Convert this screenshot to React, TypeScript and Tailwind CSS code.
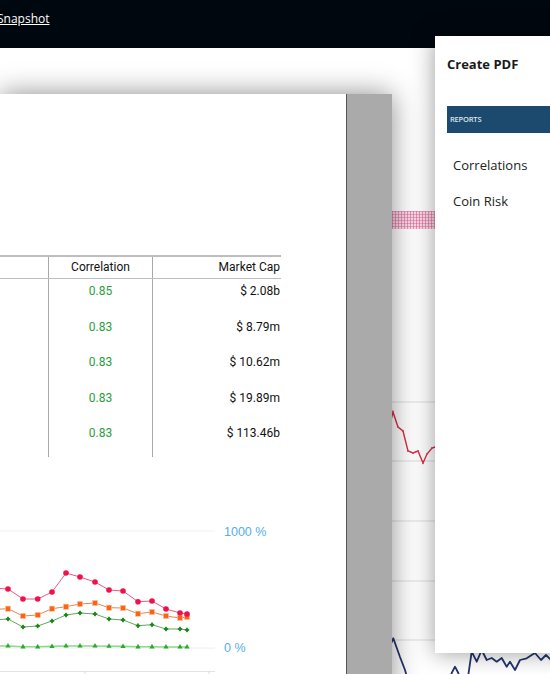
import React from 'react';

const xs = [-8, 8, 23, 37.7, 52, 66, 80, 95, 109, 123, 138, 152, 166, 180, 187];
const series = {
  red: [588, 589, 599, 599, 592, 573, 577, 582, 590, 591, 601.7, 601, 609, 613, 614],
  orange: [609.5, 608.7, 616, 615, 608.7, 606.7, 604, 603, 607.7, 608, 613.7, 612, 616, 618, 617],
  green: [620, 619, 627, 626, 621, 615, 613, 614, 619, 620, 625.7, 624.7, 629, 629, 630],
  lime: [646, 646, 646.8, 646.8, 646.4, 646, 646, 646, 646.2, 646.4, 646.8, 646.8, 647, 647, 647],
};

const rows = [
  { corr: '0.85', cap: '$ 2.08b' },
  { corr: '0.83', cap: '$ 8.79m' },
  { corr: '0.83', cap: '$ 10.62m' },
  { corr: '0.83', cap: '$ 19.89m' },
  { corr: '0.83', cap: '$ 113.46b' },
];

const toPath = (ys: number[]) => xs.map((x, i) => `${i ? 'L' : 'M'}${x} ${ys[i]}`).join(' ');

// background dashboard lines (mostly hidden behind the overlays)
const redBg: [number, number][] = [
  [390, 424], [393, 412], [398, 427], [403, 431], [408, 451], [413, 453], [418, 451],
  [423, 463], [427, 454], [432, 448], [438, 446], [446, 440], [460, 438],
];
const blueBg: [number, number][] = [
  [390, 646], [393.3, 638.3], [400, 657], [405, 670], [409, 684], [448, 684], [451.7, 673],
  [455, 666.7], [458.3, 673], [462, 684], [467, 684], [471.7, 651.7], [476.7, 661.7],
  [481.7, 650], [486.7, 660], [491.7, 658], [496.7, 661.7], [501.7, 658], [506.7, 666.7],
  [510, 661.7], [515, 670], [520, 660], [526.7, 658.3], [531.7, 655], [535, 653],
  [541, 660], [546, 655], [552, 661],
];
const pts = (p: [number, number][]) => p.map(([x, y]) => `${x},${y}`).join(' ');

function DocChart() {
  return (
    <svg width="300" height="180" viewBox="0 500 300 180" className="block">
      <line x1="0" y1="531" x2="215" y2="531" stroke="#f1f1f1" />
      <line x1="0" y1="648" x2="215" y2="648" stroke="#eeeeee" />
      <line x1="0" y1="671.5" x2="215" y2="671.5" stroke="#e3e3e3" />
      <line x1="85" y1="671" x2="85" y2="676" stroke="#d6dbe6" />
      <line x1="209" y1="671" x2="209" y2="676" stroke="#d6dbe6" />
      <text x="224" y="535.5" fill="#55aee6" fontSize="12.5" fontFamily="'Liberation Sans', Arial, sans-serif">1000 %</text>
      <text x="224" y="651.5" fill="#55aee6" fontSize="12.5" fontFamily="'Liberation Sans', Arial, sans-serif">0 %</text>

      <path d={toPath(series.lime)} fill="none" stroke="#8fd68f" strokeWidth="1.6" />
      {xs.map((x, i) => (
        <polygon key={`l${i}`} points={`${x},${series.lime[i] - 3} ${x - 2.6},${series.lime[i] + 1.6} ${x + 2.6},${series.lime[i] + 1.6}`} fill="#2ca82c" />
      ))}

      <path d={toPath(series.green)} fill="none" stroke="#63a863" strokeWidth="1" />
      {xs.map((x, i) => (
        <g key={`g${i}`} fill="#1a871a">
          <rect x={x - 2.2} y={series.green[i] - 0.9} width="4.4" height="1.8" />
          <rect x={x - 0.9} y={series.green[i] - 2.2} width="1.8" height="4.4" />
        </g>
      ))}

      <path d={toPath(series.orange)} fill="none" stroke="#e28855" strokeWidth="1" />
      {xs.map((x, i) => (
        <rect key={`o${i}`} x={x - 2.6} y={series.orange[i] - 2.6} width="5.2" height="5.2" fill="#ff6210" stroke="#f4c9b0" strokeWidth="0.6" />
      ))}

      <path d={toPath(series.red)} fill="none" stroke="#e8588a" strokeWidth="1" />
      {xs.map((x, i) => (
        <circle key={`r${i}`} cx={x} cy={series.red[i]} r="2.8" fill="#f2104c" />
      ))}
    </svg>
  );
}

function BackdropChart() {
  return (
    <svg width="158" height="294" viewBox="392 380 158 294" className="block">
      {[402, 461, 521, 581, 640].map((y) => (
        <line key={y} x1="392" y1={y} x2="550" y2={y} stroke="#dedede" strokeWidth="1.2" />
      ))}
      <polyline points={pts(redBg)} fill="none" stroke="#dc2a44" strokeWidth="1.4" />
      {redBg.map(([x, y], i) => (
        <circle key={i} cx={x} cy={y} r="1" fill="#e2445c" />
      ))}
      <polyline points={pts(blueBg)} fill="none" stroke="#22356c" strokeWidth="1.8" strokeLinejoin="round" />
    </svg>
  );
}

function Heatmap() {
  return (
    <svg width="158" height="18" className="block">
      <defs>
        <pattern id="hatch" width="3" height="3" patternUnits="userSpaceOnUse">
          <rect width="3" height="3" fill="#f8dbe6" />
          <rect x="0" y="0" width="1" height="3" fill="#e2609a" opacity="0.6" />
          <rect x="0" y="0" width="3" height="1" fill="#e2609a" opacity="0.45" />
        </pattern>
      </defs>
      <rect width="158" height="18" fill="url(#hatch)" />
    </svg>
  );
}

export default function App() {
  return (
    <div className="relative h-[674px] w-[550px] overflow-hidden bg-white font-['Open_Sans',sans-serif]">
      {/* Top bar */}
      <header className="h-12 bg-[#01070f] pt-[10px]">
        <a className="-ml-[3px] block text-[12px] leading-[18px] text-white underline">Snapshot</a>
      </header>

      {/* Dashboard behind the preview */}
      <main className="grid grid-cols-[392px_1fr]">
        <div />
        <div>
          <div className="mt-[163px]">
            <Heatmap />
          </div>
          <div className="mt-[151px]">
            <BackdropChart />
          </div>
        </div>
      </main>

      {/* PDF preview */}
      <div className="absolute left-0 top-[94px] flex h-[600px] w-[392px] shadow-[0_0_26px_rgba(0,0,0,0.45)]">
        <div className="flex-1 border-r border-[#555] bg-white pt-[161px] font-['Roboto',sans-serif]">
          <div className="w-[281px] text-[12px] text-[#111]">
            <div className="grid h-[24px] grid-cols-[49px_104px_128px] border-t-2 border-b border-[#bdbdbd]">
              <div className="border-r border-[#a8a8a8]" />
              <div className="border-r border-[#a8a8a8] text-center leading-[21px]">Correlation</div>
              <div className="pr-[1px] text-right leading-[21px]">Market Cap</div>
            </div>
            {rows.map((r, i) => (
              <div key={i} className="grid h-[35.5px] grid-cols-[49px_104px_128px]">
                <div className="border-r border-[#a8a8a8]" />
                <div className="border-r border-[#a8a8a8] text-center leading-[24px] text-[#2a9d3a]">{r.corr}</div>
                <div className="pr-[1px] text-right leading-[24px]">{r.cap}</div>
              </div>
            ))}
          </div>
          <div className="mt-[43.5px]">
            <DocChart />
          </div>
        </div>
        <div className="w-[45px] bg-[#aaaaaa]" />
      </div>

      {/* Create PDF panel */}
      <aside className="absolute left-[435px] top-[36px] h-[617px] w-[260px] bg-white px-3 pt-[19px] shadow-[0_0_22px_rgba(0,0,0,0.4)]">
        <h2 className="text-[13px] font-bold leading-[18px] text-[#1a1a1a]">Create PDF</h2>
        <div className="mt-[33px] flex h-[27px] items-center bg-[#1c4a6e] pl-[3px] text-[7.5px] font-semibold tracking-tight text-[#dfe7f0]">
          REPORTS
        </div>
        <ul className="mt-[22px] pl-[6px] text-[13px] leading-[20px] text-[#222]">
          <li>Correlations</li>
          <li className="mt-[16px]">Coin Risk</li>
        </ul>
      </aside>
    </div>
  );
}
